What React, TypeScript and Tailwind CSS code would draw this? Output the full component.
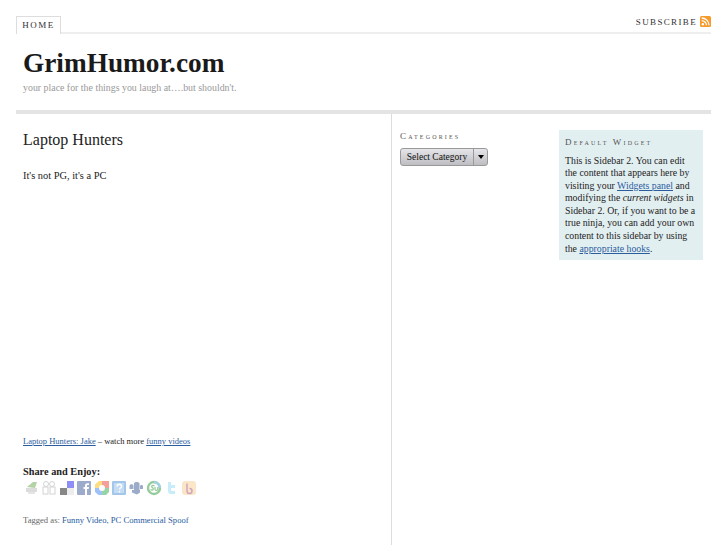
import React from "react";

function Icon({ children }: { children: React.ReactNode }) {
  return <svg width="16" height="16" viewBox="0 0 16 16" className="block shrink-0 opacity-50">{children}</svg>;
}

export default function App() {
  return (
    <div className="h-[545px] w-[727px] overflow-hidden bg-white font-['Liberation_Serif',serif] text-[#222]">
      <div className="ml-4 w-[695px]">
        {/* nav */}
        <div className="flex h-[34px] items-end justify-between border-b-2 border-[#eeeeee] pt-4">
          <div className="-mb-[2px] flex h-[18px] w-[45px] items-center justify-center border border-b-0 border-[#dddddd] bg-white text-[9px] tracking-[0.17em] text-[#333]">HOME</div>
          <div className="mb-[3px] flex items-center gap-[3px]">
            <span className="pt-[1px] text-[9px] tracking-[0.15em] text-[#333]">SUBSCRIBE</span>
            <svg width="11" height="11" viewBox="0 0 11 11" className="mb-[1px]">
              <rect width="11" height="11" rx="1.500" fill="#f79a2c" />
              <circle cx="2.800" cy="8.200" r="1.200" fill="#fff" />
              <path d="M1.700 4.600a4.700 4.700 0 0 1 4.700 4.700M1.700 2a7.300 7.300 0 0 1 7.300 7.300" stroke="#fff" strokeWidth="1.300" fill="none" />
            </svg>
          </div>
        </div>
        {/* masthead */}
        <div className="h-[80px] border-b-[4px] border-[#e4e4e4] pl-[7px] pt-[13px]">
          <div className="text-[27.300px] font-bold leading-[33px] text-[#1a1a1a]">GrimHumor.com</div>
          <div className="mt-[1px] text-[9.900px] leading-[13px] text-[#999]">your place for the things you laugh at….but shouldn't.</div>
        </div>
        {/* body */}
        <div className="flex h-[431px]">
          <div className="w-[376px] border-r border-[#dddddd] pl-[7px]">
            <h1 className="mt-[16px] text-[16px] leading-[20px] text-[#222]">Laptop Hunters</h1>
            <p className="mt-[19px] text-[10.400px] leading-[14px] text-[#222]">It's not PG, it's a PC</p>
            <p className="mt-[252px] text-[8.500px] leading-[12px]">
              <a className="text-[#2a5c9e] underline">Laptop Hunters: Jake</a> – watch more <a className="text-[#2a5c9e] underline">funny videos</a>
            </p>
            <div className="mt-[18px] text-[10.300px] font-bold leading-[13px] text-[#222]">Share and Enjoy:</div>
            <div className="mt-[2px] flex gap-[1.400px] pl-[1px]">
              <Icon><path d="M2 8h11v4H2z" fill="#bbb" /><path d="M4 12h7v2H4z" fill="#ccc" /><path d="M3 7l6-5 4 0-2 6z" fill="#6aa84f" /></Icon>
              <Icon><circle cx="5" cy="4" r="2.500" fill="none" stroke="#aaa" /><circle cx="11" cy="4" r="2.500" fill="none" stroke="#aaa" /><rect x="2" y="7" width="5" height="7" fill="none" stroke="#aaa" /><rect x="9" y="7" width="5" height="7" fill="none" stroke="#aaa" /></Icon>
              <Icon><rect x="8" y="1" width="7" height="7" fill="#1f1ff0" /><rect x="1" y="8" width="7" height="7" fill="#111" /><rect x="8" y="8" width="7" height="7" fill="#ddd" /></Icon>
              <Icon><rect x="1" y="1" width="14" height="14" rx="1" fill="#3b5998" /><path d="M9 15V9H7.500V7H9V5.500C9 4 10 3.300 11.500 3.300H13V5h-1c-.7 0-1 .3-1 1v1h2l-.3 2H11v6z" fill="#fff" /></Icon>
              <Icon><path d="M8 1h7v7H8z" fill="#ea4335" /><path d="M1 4.500L5 1h3v7H1z" fill="#fbbc05" /><path d="M1 8h7v7H4.500L1 12z" fill="#4285f4" /><path d="M8 8h7v4l-3 3H8z" fill="#34a853" /><circle cx="8" cy="8" r="3" fill="#fff" /></Icon>
              <Icon><rect x="1" y="1" width="14" height="14" rx="1" fill="#4a90d9" /><rect x="3" y="3" width="10" height="10" fill="#8cbbe8" /><path d="M6 6.500c0-3 4.500-3 4.500 0 0 1.500-2 1.500-2 3M8.500 11v1.500" stroke="#fff" strokeWidth="1.300" fill="none" /></Icon>
              <Icon><path d="M1.500 6C1.500 3.500 5.500 3.500 5.500 6v3h-4zM6 3.500C6 1.500 11.500 1.500 11.500 3.500V10H6zM12 6c0-1.500 3-1.500 3 0v3h-3zM4 10h8v2.500L9 14.500l-5-2z" fill="#3d5a98" /></Icon>
              <Icon><circle cx="8" cy="8" r="6" fill="#fff" stroke="#2f9a3a" strokeWidth="2.400" /><path d="M8 1a7 7 0 0 1 7 7h-2.500A4.500 4.500 0 0 0 8 3.500z" fill="#4aa5c8" /><path d="M4.500 9.500c1 1 2.800.7 2.800-.6S5 7.400 5.700 6.200s2.300-.9 2.600 0M9 7v2c0 2 2.800 2 2.800 0V7" stroke="#2f9a3a" strokeWidth="1.300" fill="none" /></Icon>
              <Icon><path d="M5 2h3v3h4v3H8v2c0 1 1 1 4 1v3H8c-2 0-3-1-3-3z" fill="#8fdcf4" /></Icon>
              <Icon><rect x="1" y="1" width="14" height="14" rx="3" fill="#f8cf95" /><path d="M6 3.500V11a2.500 2.500 0 1 0 2.500-2.500" stroke="#a0527a" strokeWidth="1.500" fill="none" /></Icon>
            </div>
            <p className="mt-[18px] text-[8.600px] leading-[12px] text-[#666]">
              Tagged as: <a className="text-[#2a5c9e]">Funny Video</a><span className="text-[#2a5c9e]">, </span><a className="text-[#2a5c9e]">PC Commercial Spoof</a>
            </p>
          </div>
          <div className="flex">
            <div className="w-[167px] pl-[8px]">
              <div className="mt-[17px] text-[9px] leading-[11px] tracking-[0.24em] text-[#555] [font-variant:small-caps]">Categories</div>
              <div className="mt-[6px] flex h-[18px] w-[88px] rounded-[3px] border border-[#999] bg-gradient-to-b from-[#e6e6ea] to-[#bdbdc2] text-[9.500px] text-[#111]">
                <div className="flex flex-1 items-center justify-center border-r border-[#999]">Select Category</div>
                <div className="flex w-[13px] items-center justify-center">
                  <div className="h-0 w-0 border-x-[3.500px] border-t-[4px] border-x-transparent border-t-black" />
                </div>
              </div>
            </div>
            <div className="mt-[16px] h-[130px] w-[144px] bg-[#e2eff1] pl-[6px] pr-[4px] pt-[7px]">
              <div className="text-[9px] leading-[11px] tracking-[0.24em] text-[#555] [font-variant:small-caps]">Default Widget</div>
              <p className="mt-[6.500px] text-[9.800px] leading-[12.600px] text-[#222]">
                This is Sidebar 2. You can edit the content that appears here by visiting your <a className="text-[#2a5c9e] underline">Widgets panel</a> and modifying the <em>current widgets</em> in Sidebar 2. Or, if you want to be a true ninja, you can add your own content to this sidebar by using the <a className="text-[#2a5c9e] underline">appropriate hooks</a>.
              </p>
            </div>
          </div>
        </div>
      </div>
    </div>
  );
}
